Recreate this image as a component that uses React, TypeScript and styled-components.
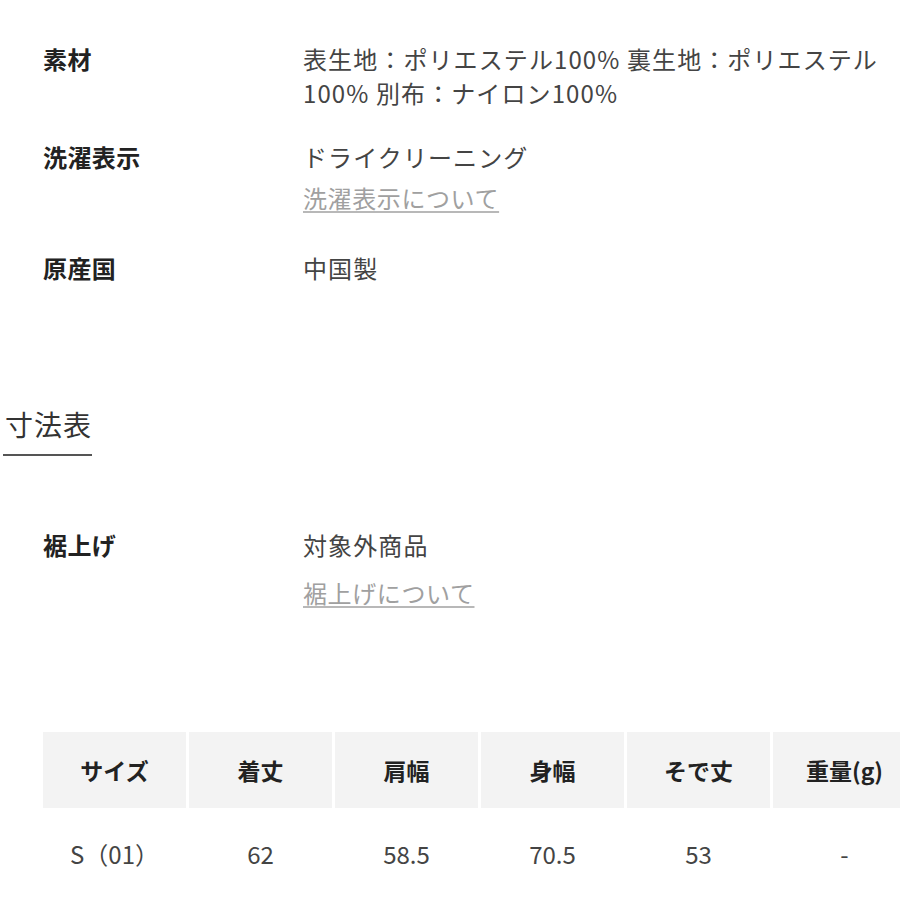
import React from "react";
import styled, { createGlobalStyle } from "styled-components";

const GlobalStyle = createGlobalStyle`
  html, body {
    margin: 0;
    padding: 0;
    background: #fff;
    overflow: hidden;
  }
  body {
    font-family: "Noto Sans CJK JP", "Noto Sans", sans-serif;
    color: #333;
  }
`;

type Spec = {
  label: string;
  lines: string;
  note?: string;
};

const materialSpecs: Spec[] = [
  {
    label: "素材",
    lines: "表生地：ポリエステル100% 裏生地：ポリエステル100% 別布：ナイロン100%",
  },
  { label: "洗濯表示", lines: "ドライクリーニング", note: "洗濯表示について" },
  { label: "原産国", lines: "中国製" },
];

const hemSpecs: Spec[] = [
  { label: "裾上げ", lines: "対象外商品", note: "裾上げについて" },
];

const sizeHeaders = ["サイズ", "着丈", "肩幅", "身幅", "そで丈", "重量(g)"];
const sizeRows = [["S（01）", "62", "58.5", "70.5", "53", "-"]];

function SpecBlock({ specs, top, noteGap }: { specs: Spec[]; top?: number; noteGap: number }) {
  return (
    <SpecList $top={top}>
      {specs.map((spec) => (
        <SpecRow key={spec.label}>
          <Label>{spec.label}</Label>
          <Value>
            <ValueText>{spec.lines}</ValueText>
            {spec.note && (
              <NoteLink href="#" $gap={noteGap}>
                {spec.note}
              </NoteLink>
            )}
          </Value>
        </SpecRow>
      ))}
    </SpecList>
  );
}

function App(): JSX.Element {
  return (
    <Page>
      <GlobalStyle />
      <SpecBlock specs={materialSpecs} noteGap={7} />

      <SectionTitle>寸法表</SectionTitle>

      <SpecBlock specs={hemSpecs} top={72} noteGap={14} />

      <SizeTable>
        {sizeHeaders.map((h) => (
          <HeadCell key={h}>{h}</HeadCell>
        ))}
        {sizeRows.map((row) =>
          row.map((cell, i) => <BodyCell key={i}>{cell}</BodyCell>),
        )}
      </SizeTable>
    </Page>
  );
}

const Page = styled.div`
  width: 900px;
  height: 900px;
  padding-top: 42px;
  box-sizing: border-box;
  overflow: hidden;
`;

const SpecList = styled.div<{ $top?: number }>`
  display: flex;
  flex-direction: column;
  gap: 30px;
  padding-left: 43px;
  margin-top: ${(p) => p.$top ?? 0}px;
`;

const SpecRow = styled.div`
  display: grid;
  grid-template-columns: 260px 592px;
  align-items: start;
`;

const Label = styled.div`
  font-size: 24px;
  line-height: 34px;
  font-weight: 700;
  color: #222;
  letter-spacing: 0.4px;
`;

const Value = styled.div`
  display: flex;
  flex-direction: column;
  align-items: flex-start;
`;

const ValueText = styled.div`
  font-size: 24px;
  line-height: 34px;
  color: #444;
  letter-spacing: 1.1px;
`;

const NoteLink = styled.a<{ $gap: number }>`
  margin: ${(p) => p.$gap}px 0 6px;
  font-size: 24px;
  line-height: 34px;
  color: #a0a0a0;
  letter-spacing: 0.6px;
  text-decoration: underline;
  text-decoration-color: #b8b8b8;
  text-decoration-thickness: 2px;
  text-underline-offset: 3px;
`;

const SectionTitle = styled.h2`
  display: inline-block;
  margin: 119px 0 0 3px;
  padding: 0 0 10px 2px;
  font-size: 28px;
  line-height: 40px;
  font-weight: 400;
  color: #333;
  letter-spacing: 1px;
  border-bottom: 2px solid #555;
`;

const SizeTable = styled.div`
  display: grid;
  grid-template-columns: repeat(6, 143px);
  grid-template-rows: 76px 90px;
  column-gap: 3px;
  margin: 116px 0 0 43px;
`;

const HeadCell = styled.div`
  display: flex;
  align-items: center;
  justify-content: center;
  background: #f3f3f3;
  font-size: 23px;
  font-weight: 700;
  color: #222;
`;

const BodyCell = styled.div`
  display: flex;
  align-items: center;
  justify-content: center;
  font-size: 24px;
  color: #444;
`;

export default App;
